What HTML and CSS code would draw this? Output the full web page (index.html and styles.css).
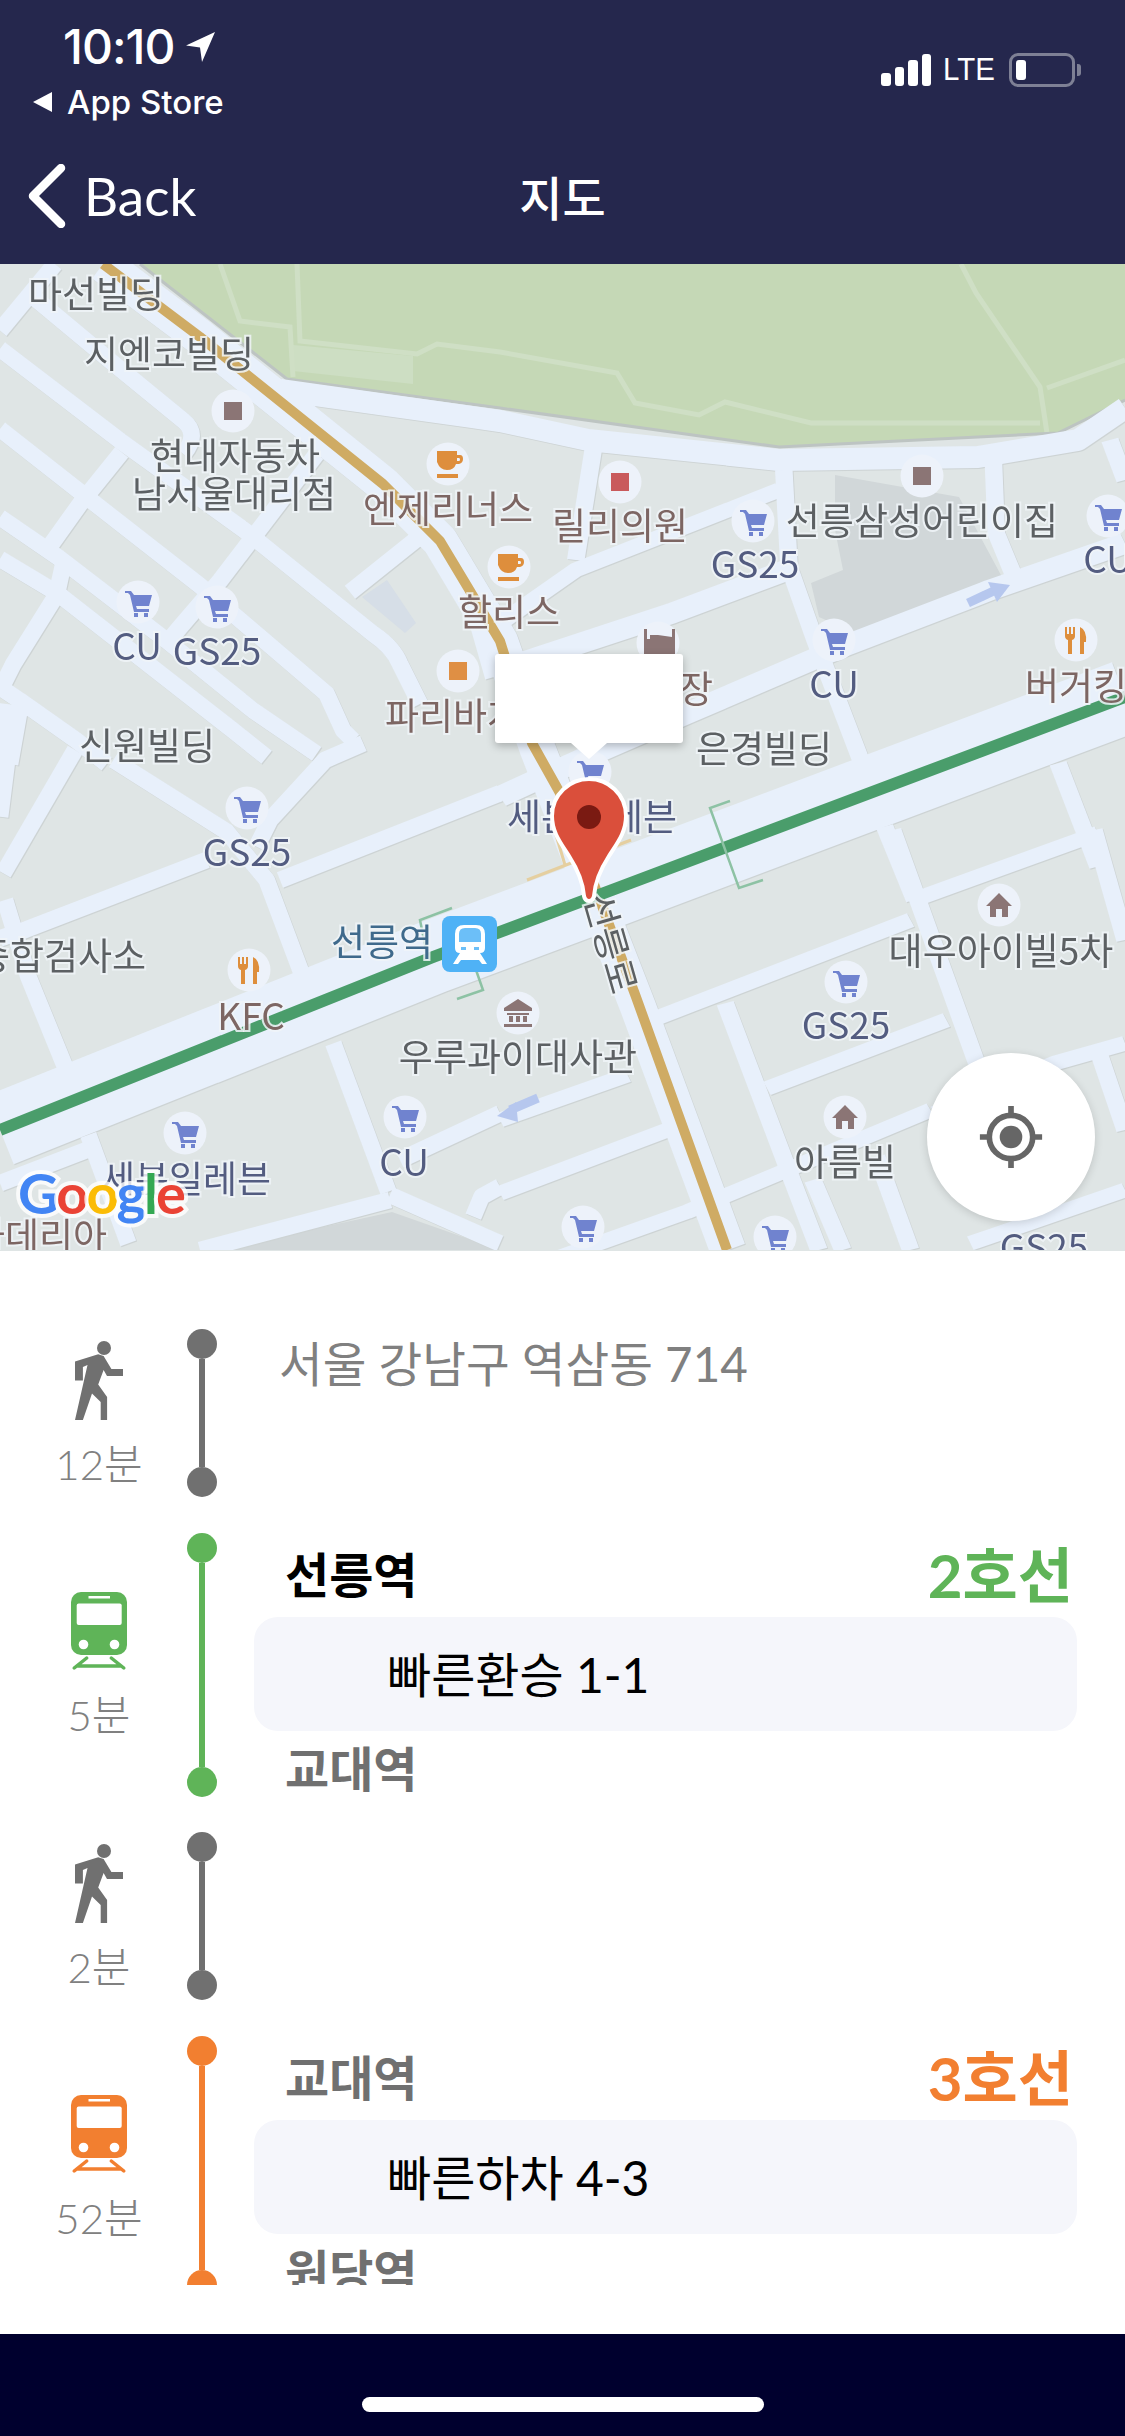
FILE: index.html
```html
<!DOCTYPE html>
<html lang="ko">
<head>
<meta charset="utf-8">
<title>지도</title>
<link rel="stylesheet" href="styles.css">
</head>
<body>
<div class="phone">
  <header class="header">
    <div class="status">
      <div class="status-left">
        <div class="clock"><span>10:10</span>
          <svg class="loc" viewBox="0 0 30 30"><path d="M29 0 L0 13.500 L14 15.500 L16 30 Z"/></svg>
        </div>
        <div class="crumb"><svg class="crumb-arrow" viewBox="0 0 21 20"><path d="M20 0 V20 L1 10 Z"/></svg><span>App Store</span></div>
      </div>
      <div class="status-right">
        <div class="bars"><i class="b1"></i><i class="b2"></i><i class="b3"></i><i class="b4"></i></div>
        <span class="lte">LTE</span>
        <div class="battery"><i class="level"></i></div>
        <i class="nub"></i>
      </div>
    </div>
    <nav class="nav">
      <div class="back">
        <svg class="chev" viewBox="0 0 38 64"><path d="M33 4 L5 32 L33 60"/></svg>
        <span>Back</span>
      </div>
      <h1 class="title">지도</h1>
      <div></div>
    </nav>
  </header>

  <section class="map">
    <svg class="map-svg" viewBox="0 264 1125 986" xmlns="http://www.w3.org/2000/svg">
      <defs>
        <symbol id="cart" viewBox="0 0 44 44"><circle cx="22" cy="22" r="21.500" fill="#edf2fa"/><path d="M9 11h6l3 4h18l-3 11H20l1 3h12v3H18L14 15l-2-2H9z" fill="#7083cf"/><rect x="18" y="33" width="4" height="4" fill="#7083cf"/><rect x="28" y="33" width="4" height="4" fill="#7083cf"/></symbol>
        <symbol id="cafe" viewBox="0 0 44 44"><circle cx="22" cy="22" r="21.500" fill="#edf2fa"/><path d="M11 9h20v4h3q3 0 3 4t-4 5h-3q-2 6-9 6t-10-8zM31 16v3h2q1 0 1-1.500t-1-1.500z" fill="#de8e3c"/><rect x="11" y="32" width="21" height="4" fill="#de8e3c"/></symbol>
        <symbol id="sq-brown" viewBox="0 0 44 44"><circle cx="22" cy="22" r="21.500" fill="#edf2fa"/><rect x="13" y="13" width="18" height="18" fill="#8b7575"/></symbol>
        <symbol id="sq-red" viewBox="0 0 44 44"><circle cx="22" cy="22" r="21.500" fill="#edf2fa"/><rect x="13" y="13" width="18" height="18" fill="#c95a5c"/></symbol>
        <symbol id="sq-orange" viewBox="0 0 44 44"><circle cx="22" cy="22" r="21.500" fill="#edf2fa"/><rect x="13" y="13" width="18" height="18" fill="#df8f44"/></symbol>
        <symbol id="fork" viewBox="0 0 44 44"><circle cx="22" cy="22" r="21.500" fill="#edf2fa"/><path d="M11 9h2v7h2V9h2v7h2V9h2v9q0 3-3 4v14h-4V22q-3-1-3-4zM26 9q7 3 6 15l-2 0v12h-4z" fill="#de8e3c"/></symbol>
        <symbol id="home" viewBox="0 0 44 44"><circle cx="22" cy="22" r="21.500" fill="#edf2fa"/><path d="M22 10 35 23h-4v11h-6v-8h-6v8h-6V23H9z" fill="#8b7575"/></symbol>
        <symbol id="museum" viewBox="0 0 44 44"><circle cx="22" cy="22" r="21.500" fill="#edf2fa"/><path d="M22 8 36 17v3H8v-3zM11 22h22v2H11zM13 25h4v6h-4zM20 25h4v6h-4zM27 25h4v6h-4zM8 33h28v3H8z" fill="#8b7575"/></symbol>
        <symbol id="bed" viewBox="0 0 44 44"><circle cx="22" cy="22" r="21.500" fill="#edf2fa"/><path d="M8 8h3v10h3v-4h8l14 2V8h3v28H8z" fill="#8b7575"/></symbol>
      </defs>

      <rect class="ground" x="0" y="264" width="1125" height="986"/>
      <path class="park" d="M140 264 L287 379 L500 408 L779 447 L1058 433 L1125 400 V264 Z"/>
      <path class="park-lite" d="M293 345 L413 356 L413 384 L293 371 Z"/>
      <g class="park-paths">
        <path d="M220 264 L240 321 L290 327 L293 377"/>
        <path d="M297 264 L300 341 L417 354 L437 344 L500 352 L617 373 L635 403 L699 415 L725 402 L811 423 H1040"/>
        <path d="M961 264 L976 293 L1040 387 L1047 433"/>
        <path d="M1047 388 L1125 360"/>
      </g>
      <path class="park-edge" d="M140 264 L287 379 L500 408 L779 447 L1058 433 L1125 400"/>
      <path class="lot" d="M835 475 L959 497 L1002 577 L855 633 L819 617 L811 583 L843 570 L835 530 Z"/>
      <path class="lot-blue" d="M362 597 L387 580 L416 623 L405 633 Z"/>
      <path class="lot" d="M392 1212 L500 1250 L217 1250 Z"/>

      <g class="roads">
        <g class="st" transform="translate(0 264) scale(.3333)">
          <path d="M165 0 L0 200"/>
          <path d="M90 90 L330 290 L550 470 Q600 510 550 570"/>
          <path d="M0 255 L360 530 L735 800 L1120 1110 Q1180 1150 1200 1200 L1260 1320"/>
          <path d="M0 495 L280 715 L600 965 L980 1290 L1030 1400 L1060 1430"/>
          <path d="M0 760 L175 880 L500 1130 L760 1340 L950 1470"/>
          <path d="M0 885 L175 990 L700 1400 L800 1480"/>
          <path d="M0 1270 L60 1310 L230 1430 L320 1500"/>
          <path d="M365 565 L240 720 L160 832 L140 860"/>
          <path d="M190 900 L170 992 L40 1200 L0 1280"/>
          <path d="M950 570 L790 780 L660 950 L540 1090 L490 1150"/>
          <path d="M1050 985 L1250 825 L1310 780"/>
          <path d="M1290 810 L1420 1030 L1480 1240"/>
          <path d="M20 1320 L0 1500" />
          <path d="M60 1330 L30 1500" />
        </g>
        <g class="st" transform="translate(0 750) scale(.3333)">
          <path d="M1500 130 L840 390"/>
          <path d="M620 330 L80 538 L0 565"/>
          <path d="M340 30 L680 245 L800 390 L905 670"/>
          <path d="M1090 -20 L975 30 L810 210 L770 290"/>
          <path d="M225 0 L10 370"/>
          <path d="M25 0 L0 200"/>
          <path d="M15 450 L85 680 L195 950"/>
          <path d="M265 1155 L385 1480"/>
          <path d="M1000 880 L1165 1325"/>
          <path d="M1170 1350 L600 1500"/>
          <path d="M1170 1335 L1500 1480"/>
          <path d="M1500 1090 L1200 1230"/>
          <path d="M1420 1400 L1445 1340 L1500 1310"/>
          <path d="M0 1300 L260 1200"/>
        </g>
        <g class="st-alt" transform="translate(500 400) scale(.3986 .3333)">
          <path d="M235 140 L190 480"/>
          <path d="M700 270 L190 510 L70 610 L0 670"/>
          <path d="M712 210 L725 500 L790 720 L905 1080"/>
          <path class="wide" d="M720 510 L430 640 L100 770 L0 810"/>
          <path class="wide" d="M1568 430 L1230 570 L860 740 L470 940 L200 1080 L0 1190"/>
          <path d="M1238 190 L1245 400 L1290 530"/>
          <path d="M1530 120 L1568 240"/>
          <path d="M1400 1090 L1500 1400"/>
          <path d="M965 1280 L1040 1500"/>
        </g>
        <g class="st-alt" transform="translate(500 830) scale(.3986 .3333)">
          <path d="M985 0 L1190 680 L1320 1100"/>
          <path d="M1500 10 L1060 200"/>
          <path d="M1030 270 L380 570"/>
          <path d="M1490 0 L1568 330"/>
          <path d="M565 520 L720 1010 L800 1260"/>
          <path d="M1120 570 L670 775"/>
          <path d="M1080 840 L720 1020 L550 1105 L470 1145 L130 1290 L0 1340"/>
          <path d="M420 900 L0 1090"/>
          <path d="M0 870 L320 735"/>
          <path d="M1568 640 L1390 700 L1090 850"/>
          <path d="M1500 660 L1568 900"/>
          <path d="M785 1050 L860 1260"/>
          <path d="M945 980 L1030 1260"/>
          <path d="M1568 1080 L1180 1240"/>
        </g>
        <path class="band" d="M280 390 L500 421 L588 440 L779 460 L978 457 L1078 440 L1125 408"/>
        <path class="band-tan" d="M103 264 L200 337 L383 484 L440 541 L500 641 L538 750 L638 1007 L728 1250"/>
        <path class="band-line" d="M0 1130 L433 957 L612 890 L1125 697"/>
      </g>
      <path class="tan" d="M103 264 L200 337 L383 484 L440 541 L500 641 L532 743 L560 793 L636 997 L727 1250"/>
      <path class="subway" d="M0 1130 L433 957 L612 890 L1125 697"/>
      <path class="bracket" d="M730 801 L710 808 L739 888 L763 880"/>
      <path class="bracket" d="M452 908 L420 920 L428 960"/>
      <path class="bracket" d="M476 970 L483 990 L457 999"/>
      <path class="tanline" d="M631 840 L527 880"/>
      <path class="tanline" d="M553 825 L565 865"/>
      <path class="arrow" d="M968 603 L1000 588"/><path class="arrow-head" d="M1010 585 L988 582 L997 602 Z"/>
      <path class="arrow" d="M538 1098 L510 1110"/><path class="arrow-head" d="M497 1116 L516 1102 L518 1122 Z"/>

      <use href="#sq-brown" x="211" y="389" width="44" height="44"/>
      <use href="#cafe" x="426" y="442" width="44" height="44"/>
      <use href="#sq-red" x="598" y="460" width="44" height="44"/>
      <use href="#cart" x="731" y="499" width="44" height="44"/>
      <use href="#sq-brown" x="900" y="454" width="44" height="44"/>
      <use href="#cart" x="1086" y="494" width="44" height="44"/>
      <use href="#cafe" x="487" y="545" width="44" height="44"/>
      <use href="#cart" x="116" y="580" width="44" height="44"/>
      <use href="#cart" x="195" y="585" width="44" height="44"/>
      <use href="#cart" x="812" y="618" width="44" height="44"/>
      <use href="#fork" x="1054" y="618" width="44" height="44"/>
      <use href="#sq-orange" x="436" y="649" width="44" height="44"/>
      <use href="#bed" x="636" y="621" width="44" height="44"/>
      <use href="#cart" x="568" y="750" width="44" height="44"/>
      <use href="#cart" x="225" y="786" width="44" height="44"/>
      <use href="#fork" x="227" y="948" width="44" height="44"/>
      <use href="#home" x="977" y="883" width="44" height="44"/>
      <use href="#cart" x="824" y="960" width="44" height="44"/>
      <use href="#museum" x="496" y="991" width="44" height="44"/>
      <use href="#cart" x="383" y="1095" width="44" height="44"/>
      <use href="#cart" x="163" y="1111" width="44" height="44"/>
      <use href="#home" x="823" y="1095" width="44" height="44"/>
      <use href="#cart" x="561" y="1205" width="44" height="44"/>
      <use href="#cart" x="753" y="1215" width="44" height="44"/>

      <g class="labels">
        <text class="bld" x="96" y="308">마선빌딩</text>
        <text class="bld" x="169" y="368">지엔코빌딩</text>
        <text class="bld" x="235" y="470">현대자동차</text>
        <text class="bld" x="234" y="508">남서울대리점</text>
        <text class="poi" x="448" y="523">엔제리너스</text>
        <text class="poi" x="620" y="540">릴리의원</text>
        <text class="shop" x="755" y="578">GS25</text>
        <text class="bld" x="922" y="535">선릉삼성어린이집</text>
        <text class="shop" x="1108" y="573">CU</text>
        <text class="poi" x="509" y="626">할리스</text>
        <text class="shop" x="137" y="660">CU</text>
        <text class="shop" x="217" y="665">GS25</text>
        <text class="shop" x="834" y="698">CU</text>
        <text class="poi" x="1076" y="700">버거킹</text>
        <text class="poi" x="470" y="730">파리바게뜨</text>
        <text class="poi" x="696" y="703">장</text>
        <text class="bld" x="764" y="763">은경빌딩</text>
        <text class="bld" x="147" y="760">신원빌딩</text>
        <text class="shop" x="592" y="831">세븐일레븐</text>
        <text class="shop" x="247" y="866">GS25</text>
        <text class="stn" x="382" y="956">선릉역</text>
        <text class="bld" x="61" y="970">종합검사소</text>
        <text class="bld" x="1001" y="965">대우아이빌5차</text>
        <text class="poi" x="251" y="1030">KFC</text>
        <text class="shop" x="846" y="1039">GS25</text>
        <text class="bld" x="518" y="1071">우루과이대사관</text>
        <text class="shop" x="404" y="1176">CU</text>
        <text class="bld" x="845" y="1176">아름빌</text>
        <text class="shop" x="186" y="1193">세븐일레븐</text>
        <text class="poi" x="39" y="1250">카데리아</text>
        <text class="shop" x="1044" y="1261">GS25</text>
        <text class="road" transform="translate(598 947) rotate(74)">선릉로</text>
      </g>

      <rect class="stn-box" x="442" y="916" width="55" height="56" rx="8"/>
      <path class="stn-train" d="M455 934 q0-9 9-9 h12 q9 0 9 9 v14 q0 5-5 5 l7 11 h-5 l-3-4 h-18 l-3 4 h-5 l7-11 q-5 0-5-5 z"/>
      <path class="stn-win" d="M459 942 v-8 q0-6 6-6 h10 q6 0 6 6 v8 z"/>
      <rect class="stn-win" x="461" y="947" width="5" height="3"/>
      <rect class="stn-win" x="474" y="947" width="5" height="3"/>

      <text class="google" x="18" y="1214"><tspan class="g-b">G</tspan><tspan class="g-r">o</tspan><tspan class="g-y">o</tspan><tspan class="g-b">g</tspan><tspan class="g-g">l</tspan><tspan class="g-r">e</tspan></text>
    </svg>

    <div class="bubble"></div>
    <svg class="pin" viewBox="0 0 82 128"><path d="M41 3 C60 3 78 18 78 40 C78 56 70 66 61 80 C52 94 47 106 46 120 Q45 125 41 125 Q37 125 36 120 C35 106 30 94 21 80 C12 66 4 56 4 40 C4 18 22 3 41 3 Z"/><circle cx="41" cy="41" r="12"/></svg>
    <button class="locate" type="button">
      <svg viewBox="0 0 70 70"><circle class="ring" cx="35" cy="35" r="23"/><circle class="core" cx="35" cy="35" r="12"/><path class="ticks" d="M35 2V13M35 57V68M2 35H13M57 35H68"/></svg>
    </button>
  </section>

  <main class="sheet">
    <div class="route">

      <div class="seg walk">
        <div class="side">
          <svg class="i-walk" viewBox="0 0 48 79"><circle cx="29" cy="7" r="7"/><path d="M0 20.400 23.200 13.200 28.600 15 36.400 28H48V35H32L28.600 29 23.200 43.600 32.100 56V79H25.700V61L17 52.500 7.900 79H0L12.500 24 7.900 26V39.600H0Z"/></svg>
          <span class="time">12분</span>
        </div>
        <div class="rail"><i class="dot"></i><i class="line"></i><i class="dot"></i></div>
        <div class="body"><p class="addr">서울 강남구 역삼동 714</p></div>
      </div>

      <div class="seg line2">
        <div class="side">
          <svg class="i-train" viewBox="0 0 56 79"><rect width="56" height="63" rx="10"/><rect class="w" x="5.700" y="11.400" width="45" height="21.600" rx="2"/><rect class="w" x="17.500" y="4" width="21.500" height="2.500"/><circle class="w" cx="12.500" cy="52.500" r="4.800"/><circle class="w" cx="43.500" cy="52.500" r="4.800"/><path class="t" d="M15.700 66 3.200 76M40.300 66 52.800 76M8 74H48"/></svg>
          <span class="time">5분</span>
        </div>
        <div class="rail"><i class="dot"></i><i class="line"></i><i class="dot"></i></div>
        <div class="body">
          <div class="from"><strong class="stop active">선릉역</strong><strong class="lname">2호선</strong></div>
          <div class="tip">빠른환승 1-1</div>
          <strong class="stop end">교대역</strong>
        </div>
      </div>

      <div class="seg walk">
        <div class="side">
          <svg class="i-walk" viewBox="0 0 48 79"><circle cx="29" cy="7" r="7"/><path d="M0 20.400 23.200 13.200 28.600 15 36.400 28H48V35H32L28.600 29 23.200 43.600 32.100 56V79H25.700V61L17 52.500 7.900 79H0L12.500 24 7.900 26V39.600H0Z"/></svg>
          <span class="time">2분</span>
        </div>
        <div class="rail"><i class="dot"></i><i class="line"></i><i class="dot"></i></div>
        <div class="body"></div>
      </div>

      <div class="seg line3">
        <div class="side">
          <svg class="i-train" viewBox="0 0 56 79"><rect width="56" height="63" rx="10"/><rect class="w" x="5.700" y="11.400" width="45" height="21.600" rx="2"/><rect class="w" x="17.500" y="4" width="21.500" height="2.500"/><circle class="w" cx="12.500" cy="52.500" r="4.800"/><circle class="w" cx="43.500" cy="52.500" r="4.800"/><path class="t" d="M15.700 66 3.200 76M40.300 66 52.800 76M8 74H48"/></svg>
          <span class="time">52분</span>
        </div>
        <div class="rail"><i class="dot"></i><i class="line"></i><i class="dot"></i></div>
        <div class="body">
          <div class="from"><strong class="stop">교대역</strong><strong class="lname">3호선</strong></div>
          <div class="tip">빠른하차 4-3</div>
          <strong class="stop end">원당역</strong>
        </div>
      </div>

    </div>
  </main>

  <footer class="home"><i class="indicator"></i></footer>
</div>
</body>
</html>
```

FILE: styles.css
```css
* { box-sizing: border-box; }
html, body { margin: 0; padding: 0; background: #fff; }
body { font-family: Lato, "Noto Sans CJK KR", sans-serif; }
i { display: block; }
.phone { width: 1125px; height: 2436px; display: flex; flex-direction: column; overflow: hidden; }

/* header */
.header { height: 264px; background: #25274d; color: #fff; display: flex; flex-direction: column; }
.status { height: 140px; display: flex; justify-content: space-between; padding: 20px 44px 0 32px; }
.clock { display: flex; align-items: center; gap: 12px; padding-left: 31px; font: 500 48px/54px Inter, sans-serif; letter-spacing: -1px; }
.loc { width: 30px; height: 30px; fill: #fff; }
.crumb { display: flex; align-items: center; gap: 14px; margin-top: 8px; font: 500 33px/40px Inter, sans-serif; }
.crumb-arrow { width: 21px; height: 20px; fill: #fff; }
.status-right { display: flex; align-items: flex-start; padding-top: 33px; }
.bars { display: flex; align-items: flex-end; gap: 4px; height: 33px; margin-right: 12px; }
.bars i { width: 9.500px; background: #fff; border-radius: 3px; }
.b1 { height: 13px; }
.b2 { height: 19px; }
.b3 { height: 26px; }
.b4 { height: 32px; }
.lte { font: 500 32px/33px "Liberation Sans", sans-serif; margin-right: 14px; transform: scaleX(.92); transform-origin: left; width: 52px; }
.battery { width: 66px; height: 34px; border: 3px solid #7e8095; border-radius: 9px; padding: 4px; }
.level { width: 10px; height: 20px; background: #fff; border-radius: 3px; }
.nub { width: 4px; height: 12px; margin: 11px 0 0 2px; background: #7e8095; border-radius: 0 3px 3px 0; }
.nav { flex: 1; display: grid; grid-template-columns: 1fr auto 1fr; align-items: center; padding: 0 0 12px 28px; }
.back { display: flex; align-items: center; gap: 18px; font: 400 53px/64px Lato, sans-serif; }
.chev { width: 38px; height: 64px; fill: none; stroke: #fff; stroke-width: 8.500; stroke-linecap: round; stroke-linejoin: round; }
.title { margin: 0 0 0 -28px; font: 500 47px/60px "Noto Sans CJK KR", sans-serif; }

/* map */
.map { position: relative; height: 987px; overflow: hidden; background: #dfe5e5; }
.map-svg { display: block; width: 1125px; height: 986px; filter: blur(.7px); }
.ground { fill: #dfe5e5; }
.park { fill: #c5d8b6; }
.park-lite { fill: #cddec3; }
.park-paths path { fill: none; stroke: #cfdfc5; stroke-width: 5; }
.park-edge { fill: none; stroke: #bdc4c2; stroke-width: 3; }
.lot { fill: #d1d7d9; }
.lot-blue { fill: #d6dee7; }
.roads { fill: none; stroke: #e8f0fb; stroke-linejoin: round; filter: drop-shadow(1px 1.500px 0 #cdd3d4); }
.st path { stroke-width: 50; }
.st-alt path { stroke-width: 44; }
.st-alt .wide { stroke-width: 62; }
.band { stroke-width: 22; }
.band-tan { stroke-width: 36; }
.band-line { stroke-width: 74; }
.tan { fill: none; stroke: #cfab64; stroke-width: 10; stroke-linejoin: round; }
.subway { fill: none; stroke: #4a9d6b; stroke-width: 12; }
.bracket { fill: none; stroke: #8dc2a4; stroke-width: 2.500; }
.tanline { fill: none; stroke: #e5cfa0; stroke-width: 3; }
.arrow { fill: none; stroke: #b6c7ee; stroke-width: 9; }
.arrow-head { fill: #b6c7ee; }
.labels text { font: 400 37px "Noto Sans CJK KR", sans-serif; text-anchor: middle; paint-order: stroke; stroke: rgba(240,244,248,.85); stroke-width: 4px; }
.bld { fill: #5c6063; }
.poi { fill: #7d6663; }
.shop { fill: #535c80; }
.stn { fill: #3f6a8c; }
.road { fill: #5c6063; }
.stn-box { fill: #4fb2f6; }
.stn-train { fill: #fff; }
.stn-win { fill: #6cbff8; }
.google { font: 700 56px Lato, sans-serif; paint-order: stroke; stroke: rgba(255,255,255,.8); stroke-width: 8px; letter-spacing: -2px; }
.g-b { fill: #4285f4; }
.g-r { fill: #ea4335; }
.g-y { fill: #fbbc05; }
.g-g { fill: #34a853; }
.bubble { position: absolute; left: 495px; top: 390px; width: 188px; height: 89px; background: #fff; border-radius: 3px; box-shadow: 0 3px 8px rgba(0,0,0,.25); }
.bubble::after { content: ""; position: absolute; left: 76px; top: 89px; border-style: solid; border-width: 16px 18px 0; border-color: #fff transparent transparent; }
.pin { position: absolute; left: 548px; top: 512px; width: 82px; height: 128px; }
.pin path { fill: #da4f3b; stroke: #fff; stroke-width: 4; }
.pin circle { fill: #7a1a12; }
.locate { position: absolute; left: 927px; top: 789px; width: 168px; height: 168px; padding: 0; border: 0; border-radius: 50%; background: #fff; box-shadow: 0 2px 8px rgba(0,0,0,.15); display: flex; align-items: center; justify-content: center; }
.locate svg { width: 66px; height: 66px; }
.ring { fill: none; stroke: #666; stroke-width: 6; }
.core { fill: #666; }
.ticks { fill: none; stroke: #666; stroke-width: 6; }

/* route */
.sheet { flex: 1; background: #fff; }
.route { height: 1034px; overflow: hidden; padding: 78px 0 0 30px; display: flex; flex-direction: column; gap: 35.500px; }
.seg { display: flex; flex: none; }
.walk { height: 168px; color: #707070; }
.line2 { height: 264px; color: #5fb458; }
.line3 { height: 264px; color: #f27f30; }
.side { width: 138px; margin-right: 19px; display: flex; flex-direction: column; align-items: center; justify-content: center; }
.i-walk { width: 48px; height: 79px; fill: #707070; }
.i-train { width: 56px; height: 79px; fill: currentColor; }
.i-train .w { fill: #fff; }
.i-train .t { fill: none; stroke: currentColor; stroke-width: 3.500; stroke-linecap: round; }
.time { margin-top: 22px; font: 300 42px/44px Lato, "Noto Sans CJK KR", sans-serif; color: #808080; }
.rail { width: 30px; margin-right: 37px; display: flex; flex-direction: column; align-items: center; }
.dot { width: 30px; height: 30px; flex: none; border-radius: 50%; background: currentColor; }
.line { width: 6px; flex: 1; background: currentColor; }
.body { width: 823px; }
.addr { margin: 0; padding: 8px 0 0 25px; font: 400 47.500px/54px Lato, "Noto Sans CJK KR", sans-serif; color: #808080; }
.from { height: 84px; display: flex; justify-content: space-between; align-items: center; padding: 0 4px 0 31px; }
.stop { font: 700 48px/48px "Noto Sans CJK KR", sans-serif; color: #707070; position: relative; top: -3px; }
.stop.active { color: #000; }
.lname { font: 700 60px/60px Lato, "Noto Sans CJK KR", sans-serif; color: inherit; }
.tip { height: 114px; padding-left: 133px; border-radius: 24px; background: #f5f6fb; color: #000; font: 400 48px/116px Lato, "Noto Sans CJK KR", sans-serif; }
.end { display: block; padding: 14px 0 0 31px; }

/* home */
.home { height: 102px; background: #00002e; padding-top: 63px; }
.indicator { width: 402px; height: 15px; margin-left: 362px; border-radius: 8px; background: #fff; }
```
